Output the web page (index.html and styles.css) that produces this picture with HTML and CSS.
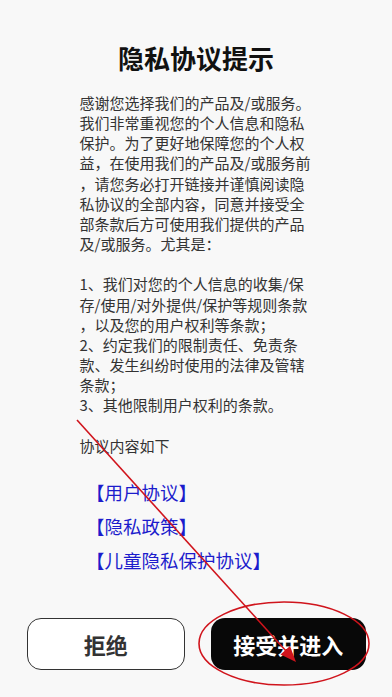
FILE: index.html
```html
<!DOCTYPE html>
<html lang="zh-CN">
<head>
<meta charset="utf-8">
<title>隐私协议提示</title>
<link rel="stylesheet" href="styles.css">
</head>
<body>
<div class="page">
  <h1 class="title">隐私协议提示</h1>
  <p class="body">感谢您选择我们的产品及/或服务。<br>我们非常重视您的个人信息和隐私<br>保护。为了更好地保障您的个人权<br>益，在使用我们的产品及/或服务前<br>，请您务必打开链接并谨慎阅读隐<br>私协议的全部内容，同意并接受全<br>部条款后方可使用我们提供的产品<br>及/或服务。尤其是：<br><br>1、我们对您的个人信息的收集/保<br>存/使用/对外提供/保护等规则条款<br>，以及您的用户权利等条款；<br>2、约定我们的限制责任、免责条<br>款、发生纠纷时使用的法律及管辖<br>条款；<br>3、其他限制用户权利的条款。<br><br>协议内容如下</p>
  <div class="links">
    <a class="link" href="#">【用户协议】</a>
    <a class="link" href="#">【隐私政策】</a>
    <a class="link" href="#">【儿童隐私保护协议】</a>
  </div>
  <div class="actions">
    <button class="btn btn-reject">拒绝</button>
    <button class="btn btn-accept">接受并进入</button>
  </div>
  <svg class="annotation" width="392" height="697" viewBox="0 0 392 697">
    <line x1="77" y1="420" x2="286" y2="651" stroke="#d0141c" stroke-width="1.6"/>
    <polygon points="296,662 280.5,654.5 290,646" fill="#d0141c"/>
    <ellipse cx="284" cy="643.5" rx="85" ry="41.5" fill="none" stroke="#d0141c" stroke-width="1.6"/>
  </svg>
</div>
</body>
</html>
```

FILE: styles.css
```css
html, body {
  margin: 0;
  padding: 0;
  background: #f8f8f8;
}
body {
  font-family: "Noto Sans CJK SC", "Noto Sans", sans-serif;
  color: #333;
}
.page {
  position: relative;
  width: 392px;
  height: 697px;
  overflow: hidden;
  display: flex;
  flex-direction: column;
  align-items: center;
}
.title {
  margin: 40px 0 0;
  font-size: 26px;
  line-height: 36px;
  font-weight: 700;
  color: #111;
}
.body {
  margin: 17px 0 0;
  width: 234px;
  padding-left: 1px;
  font-size: 15px;
  line-height: 20.15px;
  white-space: nowrap;
  color: #333;
}
.links {
  align-self: flex-start;
  margin: 19px 0 0 86px;
  display: flex;
  flex-direction: column;
}
.link {
  font-size: 18.5px;
  line-height: 34px;
  color: #1c1ccc;
  text-decoration: none;
}
.actions {
  align-self: stretch;
  display: flex;
  gap: 26px;
  padding: 0 26px 0 27px;
  margin-top: 41px;
}
.btn {
  flex: 1;
  height: 52px;
  border-radius: 14px;
  font-family: "Noto Sans CJK SC", "Noto Sans", sans-serif;
  font-size: 22px;
  font-weight: 700;
  padding: 0;
}
.btn-reject {
  background: #fff;
  border: 1.5px solid #333;
  color: #333;
}
.btn-accept {
  background: #080808;
  border: none;
  color: #fff;
}
.annotation {
  position: absolute;
  left: 0;
  top: 0;
  pointer-events: none;
}
```
